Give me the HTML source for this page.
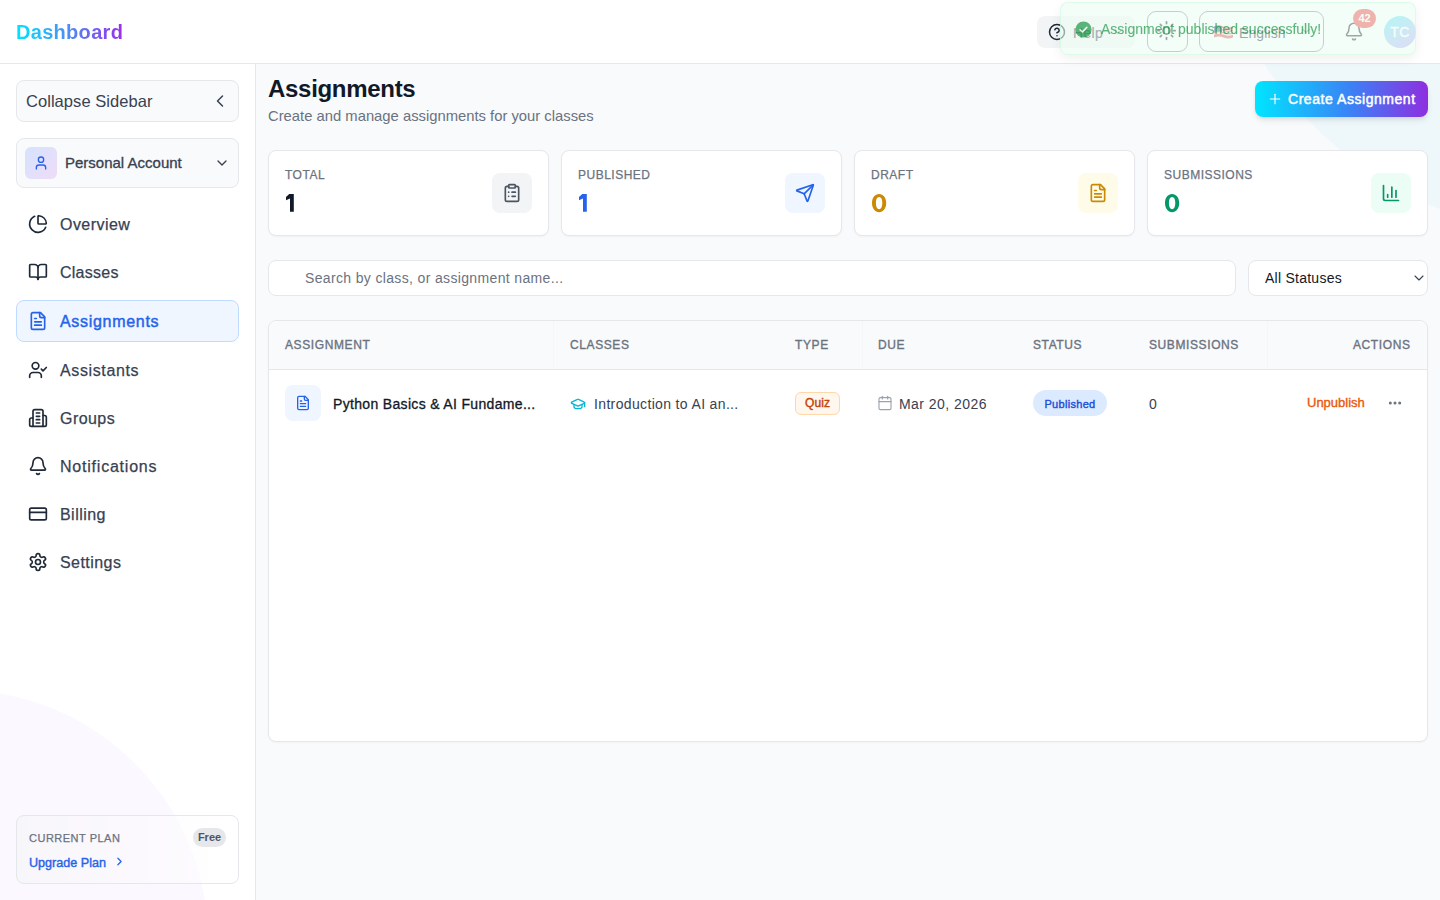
<!DOCTYPE html>
<html><head><meta charset="utf-8">
<style>
*{box-sizing:border-box;margin:0;padding:0}
html,body{width:1440px;height:900px;overflow:hidden;font-family:"Liberation Sans",sans-serif;background:#f8fafc;color:#111827}
.abs{position:absolute}
svg{display:block}
#header{position:absolute;left:0;top:0;width:1440px;height:64px;background:#fff;border-bottom:1px solid #e5e7eb;z-index:5}
#logo{position:absolute;left:16px;top:19px;font-size:20px;letter-spacing:0.3px;font-weight:700;line-height:26px;background:linear-gradient(90deg,#00e5ff,#9b30e8);-webkit-background-clip:text;background-clip:text;color:transparent}
#sidebar{position:absolute;left:0;top:64px;width:256px;height:836px;background:#fff;border-right:1px solid #e5e7eb;overflow:hidden}
#main{position:absolute;left:256px;top:64px;width:1184px;height:836px;background:#f8fafc;overflow:hidden}
.sbtn{position:absolute;left:16px;width:223px;background:#f9fafb;border:1px solid #e5e7eb;border-radius:8px}
.nav{position:absolute;left:16px;width:223px;height:42px}
.nav .ic{position:absolute;left:12px;top:10px}
.nav .tx{position:absolute;left:44px;top:11px;font-size:16px;line-height:20px;font-weight:400;color:#374151;letter-spacing:0.45px;-webkit-text-stroke:0.25px #374151}
.nav.active{background:#eff6ff;border:1px solid #bfdbfe;border-radius:8px}
.nav.active .ic{left:11px;top:10px}
.nav.active .tx{left:43px;top:11px;color:#2563eb;font-weight:400;letter-spacing:0.7px;-webkit-text-stroke:0.45px #2563eb}
.card{position:absolute;top:86px;width:281px;height:86px;background:#fff;border:1px solid #e5e7eb;border-radius:8px;box-shadow:0 1px 2px rgba(0,0,0,.04)}
.card .lb{position:absolute;left:16px;top:16px;font-size:12px;line-height:16px;color:#6b7280;letter-spacing:0.5px;-webkit-text-stroke:0.25px #6b7280}
.card .val{position:absolute;left:16px;top:37px;font-size:25px;line-height:30px;font-weight:700}
.card .ib{position:absolute;right:16px;top:22px;width:40px;height:40px;border-radius:8px}
.card .ib svg{position:absolute;left:10px;top:10px}
.th{position:absolute;top:16px;font-size:12px;line-height:16px;font-weight:400;color:#6b7280;letter-spacing:0.6px;-webkit-text-stroke:0.35px #6b7280}
.td{position:absolute;font-size:14px;line-height:20px}
</style></head>
<body>
<div id="header">
  <div id="logo">Dashboard</div>
  <!-- Help -->
  <div class="abs" style="left:1037px;top:16px;width:98px;height:32px;border-radius:8px;background:#f3f4f6">
    <svg class="abs" style="left:11px;top:7px" width="18" height="18" viewBox="0 0 24 24" fill="none" stroke="#1f2937" stroke-width="2" stroke-linecap="round" stroke-linejoin="round"><circle cx="12" cy="12" r="10"/><path d="M9.09 9a3 3 0 0 1 5.83 1c0 2-3 3-3 3"/><path d="M12 17h.01"/></svg>
    <div class="abs" style="left:36px;top:8px;font-size:14px;line-height:18px;color:#374151;letter-spacing:0.3px;-webkit-text-stroke:0.2px #374151">Help</div>
    <svg class="abs" style="left:75px;top:10px" width="12" height="12" viewBox="0 0 24 24" fill="none" stroke="#374151" stroke-width="2" stroke-linecap="round" stroke-linejoin="round"><path d="m6 9 6 6 6-6"/></svg>
  </div>
  <!-- theme -->
  <div class="abs" style="left:1147px;top:11px;width:41px;height:41px;border-radius:9px;border:1.6px solid #858c92">
    <svg class="abs" style="left:8.4px;top:8.4px" width="21" height="21" viewBox="0 0 24 24" fill="none" stroke="#1f2937" stroke-width="2" stroke-linecap="round" stroke-linejoin="round"><circle cx="12" cy="12" r="4"/><path d="M12 2v2"/><path d="M12 20v2"/><path d="m4.93 4.93 1.41 1.41"/><path d="m17.66 17.66 1.41 1.41"/><path d="M2 12h2"/><path d="M20 12h2"/><path d="m6.34 17.66-1.41 1.41"/><path d="m19.07 4.93-1.41 1.41"/></svg>
  </div>
  <!-- language -->
  <div class="abs" style="left:1199px;top:11px;width:125px;height:41px;border-radius:9px;border:1.6px solid #858c92">
    <svg class="abs" style="left:14px;top:13px" width="19" height="14" viewBox="0 0 19 14"><path d="M0 1.5 Q5 -0.5 9.5 1.5 T19 1.5 V12.5 Q14 14.5 9.5 12.5 T0 12.5Z" fill="#e0585c"/><path d="M0 4 Q5 2 9.5 4 T19 4 M0 6.5 Q5 4.5 9.5 6.5 T19 6.5 M0 9 Q5 7 9.5 9 T19 9" stroke="#f4f4f4" stroke-width="1.3" fill="none"/><path d="M0 1.5 Q4 0 8 1 V7 Q4 6 0 7.5Z" fill="#3b5b9c"/></svg>
    <div class="abs" style="left:39px;top:12px;font-size:14px;line-height:18px;color:#1f2937;letter-spacing:0.1px">English</div>
    <svg class="abs" style="left:100px;top:13px" width="12" height="12" viewBox="0 0 24 24" fill="none" stroke="#4b5563" stroke-width="2" stroke-linecap="round" stroke-linejoin="round"><path d="m6 9 6 6 6-6"/></svg>
  </div>
  <!-- bell -->
  <svg class="abs" style="left:1344px;top:21px" width="20" height="21" viewBox="0 0 24 24" fill="none" stroke="#1f2937" stroke-width="1.8" stroke-linecap="round" stroke-linejoin="round"><path d="M10.268 21a2 2 0 0 0 3.464 0"/><path d="M3.262 15.326A1 1 0 0 0 4 17h16a1 1 0 0 0 .74-1.673C19.41 13.956 18 12.499 18 8A6 6 0 0 0 6 8c0 4.499-1.411 5.956-2.738 7.326"/></svg>
  <div class="abs" style="left:1353px;top:9px;width:23px;height:19px;border-radius:10px;background:#ef4444;color:#fff;font-size:11px;line-height:19px;font-weight:700;text-align:center">42</div>
  <!-- avatar -->
  <div class="abs" style="left:1384px;top:16px;width:32px;height:32px;border-radius:50%;background:linear-gradient(150deg,#67e4f7 10%,#a9c4f5 60%,#c0a8fb);color:#fff;font-size:14px;line-height:32px;font-weight:400;-webkit-text-stroke:0.35px #fff;letter-spacing:0.3px;text-align:center">TC</div>
  <!-- toast -->
  <div class="abs" style="left:1060px;top:2px;width:356px;height:53px;border-radius:8px;background:rgba(236,253,243,.6);border:1px solid rgba(200,250,220,.55);box-shadow:0 4px 12px rgba(0,0,0,.06)">
    <div class="abs" style="left:0;top:0;width:100%;height:100%;opacity:.62">
    <svg class="abs" style="left:14px;top:18px" width="17" height="17" viewBox="0 0 20 20"><circle cx="10" cy="10" r="9.5" fill="#008a2e"/><path d="M6 10.3l2.6 2.6L14 7.4" stroke="#fff" stroke-width="1.8" fill="none" stroke-linecap="round" stroke-linejoin="round"/></svg>
    <div class="abs" style="left:40px;top:17px;font-size:14px;line-height:18px;font-weight:400;color:#008a2e;-webkit-text-stroke:0.12px #008a2e;letter-spacing:0px">Assignment published successfully!</div>
    </div>
  </div>
</div>

<div id="sidebar">
  <div class="abs" style="left:-292px;top:626px;width:500px;height:500px;border-radius:50%;background:rgba(168,85,247,.04)"></div>
  <div class="sbtn" style="top:16px;height:42px">
    <div class="abs" style="left:9px;top:10px;font-size:16.5px;line-height:20px;color:#374151;letter-spacing:0.05px">Collapse Sidebar</div>
    <svg class="abs" style="left:193px;top:10px" width="20" height="20" viewBox="0 0 24 24" fill="none" stroke="#374151" stroke-width="1.8" stroke-linecap="round" stroke-linejoin="round"><path d="m15 18-6-6 6-6"/></svg>
  </div>
  <div class="sbtn" style="top:74px;height:50px">
    <div class="abs" style="left:8px;top:8px;width:32px;height:32px;border-radius:6px;background:linear-gradient(135deg,#d5e3fd,#efdcf8)">
      <svg class="abs" style="left:8px;top:8px" width="16" height="16" viewBox="0 0 24 24" fill="none" stroke="#2563eb" stroke-width="2" stroke-linecap="round" stroke-linejoin="round"><path d="M19 21v-2a4 4 0 0 0-4-4H9a4 4 0 0 0-4 4v2"/><circle cx="12" cy="7" r="4"/></svg>
    </div>
    <div class="abs" style="left:48px;top:15px;font-size:15px;line-height:18px;font-weight:400;color:#374151;-webkit-text-stroke:0.32px #374151">Personal Account</div>
    <svg class="abs" style="left:197px;top:16px" width="16" height="16" viewBox="0 0 24 24" fill="none" stroke="#374151" stroke-width="2" stroke-linecap="round" stroke-linejoin="round"><path d="m6 9 6 6 6-6"/></svg>
  </div>

  <div class="nav" style="top:140px">
    <svg class="ic" width="20" height="20" viewBox="0 0 24 24" fill="none" stroke="#1f2937" stroke-width="2" stroke-linecap="round" stroke-linejoin="round"><path d="M21 12c.552 0 1.005-.449.95-.998a10 10 0 0 0-8.953-8.951c-.55-.055-.998.398-.998.95v8a1 1 0 0 0 1 1z"/><path d="M21.21 15.89A10 10 0 1 1 8 2.83"/></svg>
    <div class="tx">Overview</div>
  </div>
  <div class="nav" style="top:188px">
    <svg class="ic" width="20" height="20" viewBox="0 0 24 24" fill="none" stroke="#1f2937" stroke-width="2" stroke-linecap="round" stroke-linejoin="round"><path d="M12 7v14"/><path d="M3 18a1 1 0 0 1-1-1V4a1 1 0 0 1 1-1h5a4 4 0 0 1 4 4 4 4 0 0 1 4-4h5a1 1 0 0 1 1 1v13a1 1 0 0 1-1 1h-6a3 3 0 0 0-3 3 3 3 0 0 0-3-3z"/></svg>
    <div class="tx" style="letter-spacing:0.25px">Classes</div>
  </div>
  <div class="nav active" style="top:236px">
    <svg class="ic" width="20" height="20" viewBox="0 0 24 24" fill="none" stroke="#2563eb" stroke-width="2" stroke-linecap="round" stroke-linejoin="round"><path d="M15 2H6a2 2 0 0 0-2 2v16a2 2 0 0 0 2 2h12a2 2 0 0 0 2-2V7Z"/><path d="M14 2v4a2 2 0 0 0 2 2h4"/><path d="M10 9H8"/><path d="M16 13H8"/><path d="M16 17H8"/></svg>
    <div class="tx">Assignments</div>
  </div>
  <div class="nav" style="top:286px">
    <svg class="ic" width="20" height="20" viewBox="0 0 24 24" fill="none" stroke="#1f2937" stroke-width="2" stroke-linecap="round" stroke-linejoin="round"><path d="m16 11 2 2 4-4"/><path d="M16 21v-2a4 4 0 0 0-4-4H6a4 4 0 0 0-4 4v2"/><circle cx="9" cy="7" r="4"/></svg>
    <div class="tx" style="letter-spacing:0.62px">Assistants</div>
  </div>
  <div class="nav" style="top:334px">
    <svg class="ic" width="20" height="20" viewBox="0 0 24 24" fill="none" stroke="#1f2937" stroke-width="2" stroke-linecap="round" stroke-linejoin="round"><path d="M6 22V4a2 2 0 0 1 2-2h8a2 2 0 0 1 2 2v18Z"/><path d="M6 12H4a2 2 0 0 0-2 2v6a2 2 0 0 0 2 2h2"/><path d="M18 9h2a2 2 0 0 1 2 2v9a2 2 0 0 1-2 2h-2"/><path d="M10 6h4"/><path d="M10 10h4"/><path d="M10 14h4"/><path d="M10 18h4"/></svg>
    <div class="tx">Groups</div>
  </div>
  <div class="nav" style="top:382px">
    <svg class="ic" width="20" height="20" viewBox="0 0 24 24" fill="none" stroke="#1f2937" stroke-width="2" stroke-linecap="round" stroke-linejoin="round"><path d="M10.268 21a2 2 0 0 0 3.464 0"/><path d="M3.262 15.326A1 1 0 0 0 4 17h16a1 1 0 0 0 .74-1.673C19.41 13.956 18 12.499 18 8A6 6 0 0 0 6 8c0 4.499-1.411 5.956-2.738 7.326"/></svg>
    <div class="tx" style="letter-spacing:0.78px">Notifications</div>
  </div>
  <div class="nav" style="top:430px">
    <svg class="ic" width="20" height="20" viewBox="0 0 24 24" fill="none" stroke="#1f2937" stroke-width="2" stroke-linecap="round" stroke-linejoin="round"><rect width="20" height="14" x="2" y="5" rx="2"/><line x1="2" x2="22" y1="10" y2="10"/></svg>
    <div class="tx">Billing</div>
  </div>
  <div class="nav" style="top:478px">
    <svg class="ic" width="20" height="20" viewBox="0 0 24 24" fill="none" stroke="#1f2937" stroke-width="2" stroke-linecap="round" stroke-linejoin="round"><path d="M12.22 2h-.44a2 2 0 0 0-2 2v.18a2 2 0 0 1-1 1.73l-.43.25a2 2 0 0 1-2 0l-.15-.08a2 2 0 0 0-2.73.73l-.22.38a2 2 0 0 0 .73 2.73l.15.1a2 2 0 0 1 1 1.72v.51a2 2 0 0 1-1 1.74l-.15.09a2 2 0 0 0-.73 2.73l.22.38a2 2 0 0 0 2.73.73l.15-.08a2 2 0 0 1 2 0l.43.25a2 2 0 0 1 1 1.73V20a2 2 0 0 0 2 2h.44a2 2 0 0 0 2-2v-.18a2 2 0 0 1 1-1.73l.43-.25a2 2 0 0 1 2 0l.15.08a2 2 0 0 0 2.73-.73l.22-.39a2 2 0 0 0-.73-2.73l-.15-.08a2 2 0 0 1-1-1.74v-.5a2 2 0 0 1 1-1.74l.15-.09a2 2 0 0 0 .73-2.73l-.22-.38a2 2 0 0 0-2.73-.73l-.15.08a2 2 0 0 1-2 0l-.43-.25a2 2 0 0 1-1-1.73V4a2 2 0 0 0-2-2z"/><circle cx="12" cy="12" r="3"/></svg>
    <div class="tx">Settings</div>
  </div>

  <div class="abs" style="left:16px;top:751px;width:223px;height:69px;border:1px solid #e5e7eb;border-radius:8px;background:linear-gradient(90deg,rgba(243,244,246,.5),rgba(255,255,255,.5))">
    <div class="abs" style="left:12px;top:15px;font-size:11px;line-height:14px;color:#6b7280;letter-spacing:0.5px;-webkit-text-stroke:0.25px #6b7280">CURRENT PLAN</div>
    <div class="abs" style="left:176px;top:12px;width:33px;height:19px;border-radius:10px;background:#e5e7eb;font-size:11px;line-height:19px;font-weight:700;color:#4b5563;text-align:center">Free</div>
    <div class="abs" style="left:12px;top:39px;font-size:12.6px;line-height:16px;font-weight:400;color:#2563eb;-webkit-text-stroke:0.4px #2563eb">Upgrade Plan</div>
    <svg class="abs" style="left:96px;top:39px" width="13" height="13" viewBox="0 0 24 24" fill="none" stroke="#2563eb" stroke-width="2.3" stroke-linecap="round" stroke-linejoin="round"><path d="m9 18 6-6-6-6"/></svg>
  </div>
</div>

<div id="main">
  <div class="abs" style="left:949px;top:-576px;width:748px;height:748px;border-radius:50%;background:rgba(34,211,238,.045)"></div>
  <div class="abs" style="left:12px;top:10px;font-size:24px;line-height:30px;font-weight:700;color:#111827;letter-spacing:-0.3px">Assignments</div>
  <div class="abs" style="left:12px;top:42px;font-size:14.8px;line-height:20px;color:#6b7280">Create and manage assignments for your classes</div>

  <div class="abs" style="left:999px;top:17px;width:173px;height:36px;border-radius:8px;background:linear-gradient(90deg,#00e5ff,#3b82f6 55%,#8e2ee0);box-shadow:0 4px 6px -1px rgba(0,0,0,.1),0 2px 4px -2px rgba(0,0,0,.1)">
    <svg class="abs" style="left:12px;top:10px" width="16" height="16" viewBox="0 0 24 24" fill="none" stroke="#fff" stroke-width="1.7" stroke-linecap="round" stroke-linejoin="round"><path d="M5 12h14"/><path d="M12 5v14"/></svg>
    <div class="abs" style="left:33px;top:9px;font-size:14px;line-height:18px;font-weight:400;color:#fff;-webkit-text-stroke:0.5px #fff;letter-spacing:0.55px">Create Assignment</div>
  </div>

  <div class="card" style="left:12px">
    <div class="lb">TOTAL</div><svg class="abs" style="left:16px;top:42px" width="12" height="20" viewBox="0 0 12 20"><path d="M4.2 1H8.8V18.8H5V5.4L1 7.3V3.9Z" fill="#111827"/></svg>
    <div class="ib" style="background:#f3f4f6"><svg width="20" height="20" viewBox="0 0 24 24" fill="none" stroke="#4b5563" stroke-width="2" stroke-linecap="round" stroke-linejoin="round"><rect width="8" height="4" x="8" y="2" rx="1" ry="1"/><path d="M16 4h2a2 2 0 0 1 2 2v14a2 2 0 0 1-2 2H6a2 2 0 0 1-2-2V6a2 2 0 0 1 2-2h2"/><path d="M12 11h4"/><path d="M12 16h4"/><path d="M8 11h.01"/><path d="M8 16h.01"/></svg></div>
  </div>
  <div class="card" style="left:305px">
    <div class="lb">PUBLISHED</div><svg class="abs" style="left:16px;top:42px" width="12" height="20" viewBox="0 0 12 20"><path d="M4.2 1H8.8V18.8H5V5.4L1 7.3V3.9Z" fill="#2563eb"/></svg>
    <div class="ib" style="background:#eff6ff"><svg width="20" height="20" viewBox="0 0 24 24" fill="none" stroke="#2563eb" stroke-width="2" stroke-linecap="round" stroke-linejoin="round"><path d="M14.536 21.686a.5.5 0 0 0 .937-.024l6.5-19a.496.496 0 0 0-.635-.635l-19 6.5a.5.5 0 0 0-.024.937l7.93 3.18a2 2 0 0 1 1.112 1.11z"/><path d="m21.854 2.147-10.94 10.939"/></svg></div>
  </div>
  <div class="card" style="left:598px">
    <div class="lb">DRAFT</div><svg class="abs" style="left:17px;top:43px" width="16" height="20" viewBox="0 0 16 20"><path fill-rule="evenodd" d="M7.1 0C11.2 0 14.2 3.6 14.2 9.1S11.2 18.2 7.1 18.2 0 14.6 0 9.1 3 0 7.1 0ZM7.1 3C5 3 3.9 5.2 3.9 9.1S5 15.2 7.1 15.2 10.3 13 10.3 9.1 9.2 3 7.1 3Z" fill="#ca8a04"/></svg>
    <div class="ib" style="background:#fefce8"><svg width="20" height="20" viewBox="0 0 24 24" fill="none" stroke="#ca8a04" stroke-width="2" stroke-linecap="round" stroke-linejoin="round"><path d="M15 2H6a2 2 0 0 0-2 2v16a2 2 0 0 0 2 2h12a2 2 0 0 0 2-2V7Z"/><path d="M14 2v4a2 2 0 0 0 2 2h4"/><path d="M10 9H8"/><path d="M16 13H8"/><path d="M16 17H8"/></svg></div>
  </div>
  <div class="card" style="left:891px">
    <div class="lb">SUBMISSIONS</div><svg class="abs" style="left:17px;top:43px" width="16" height="20" viewBox="0 0 16 20"><path fill-rule="evenodd" d="M7.1 0C11.2 0 14.2 3.6 14.2 9.1S11.2 18.2 7.1 18.2 0 14.6 0 9.1 3 0 7.1 0ZM7.1 3C5 3 3.9 5.2 3.9 9.1S5 15.2 7.1 15.2 10.3 13 10.3 9.1 9.2 3 7.1 3Z" fill="#059669"/></svg>
    <div class="ib" style="background:#ecfdf5"><svg width="20" height="20" viewBox="0 0 24 24" fill="none" stroke="#059669" stroke-width="2" stroke-linecap="round" stroke-linejoin="round"><path d="M3 3v16a2 2 0 0 0 2 2h16"/><path d="M18 17V9"/><path d="M13 17V5"/><path d="M8 17v-3"/></svg></div>
  </div>

  <!-- search -->
  <div class="abs" style="left:12px;top:196px;width:968px;height:36px;background:#fff;border:1px solid #e5e7eb;border-radius:8px">
    <div class="abs" style="left:36px;top:8px;font-size:14px;line-height:18px;color:#6b7280;letter-spacing:0.35px">Search by class, or assignment name...</div>
  </div>
  <div class="abs" style="left:992px;top:196px;width:180px;height:36px;background:#fff;border:1px solid #e5e7eb;border-radius:8px">
    <div class="abs" style="left:16px;top:8px;font-size:14px;line-height:18px;color:#111827;letter-spacing:0.25px">All Statuses</div>
    <svg class="abs" style="left:162px;top:9px" width="16" height="16" viewBox="0 0 24 24" fill="none" stroke="#374151" stroke-width="1.6" stroke-linecap="round" stroke-linejoin="round"><path d="m6 9 6 6 6-6"/></svg>
  </div>

  <!-- table -->
  <div class="abs" style="left:12px;top:256px;width:1160px;height:422px;background:#fff;border:1px solid #e5e7eb;border-radius:8px;overflow:hidden;box-shadow:0 1px 2px rgba(0,0,0,.03)">
    <div class="abs" style="left:0;top:0;width:1158px;height:49px;background:#f9fafb;border-bottom:1px solid #e5e7eb"></div>
    <div class="abs" style="left:284px;top:0;width:1px;height:48px;background:#f5f6f8"></div>
    <div class="abs" style="left:593px;top:0;width:1px;height:48px;background:#f5f6f8"></div>
    <div class="abs" style="left:998px;top:0;width:1px;height:48px;background:#f5f6f8"></div>
    <div class="th" style="left:16px">ASSIGNMENT</div>
    <div class="th" style="left:301px">CLASSES</div>
    <div class="th" style="left:526px">TYPE</div>
    <div class="th" style="left:609px">DUE</div>
    <div class="th" style="left:764px">STATUS</div>
    <div class="th" style="left:880px">SUBMISSIONS</div>
    <div class="th" style="left:1084px">ACTIONS</div>

    <div class="abs" style="left:16px;top:64px;width:36px;height:36px;border-radius:8px;background:#eff6ff">
      <svg class="abs" style="left:10px;top:10px" width="16" height="16" viewBox="0 0 24 24" fill="none" stroke="#2563eb" stroke-width="2" stroke-linecap="round" stroke-linejoin="round"><path d="M15 2H6a2 2 0 0 0-2 2v16a2 2 0 0 0 2 2h12a2 2 0 0 0 2-2V7Z"/><path d="M14 2v4a2 2 0 0 0 2 2h4"/><path d="M10 9H8"/><path d="M16 13H8"/><path d="M16 17H8"/></svg>
    </div>
    <div class="td" style="left:64px;top:73px;font-weight:400;color:#111827;letter-spacing:0.33px;-webkit-text-stroke:0.3px #111827">Python Basics &amp; AI Fundame...</div>
    <svg class="abs" style="left:300.5px;top:74.5px" width="16" height="16" viewBox="0 0 24 24" fill="none" stroke="#06b6d4" stroke-width="2" stroke-linecap="round" stroke-linejoin="round"><path d="M21.42 10.922a1 1 0 0 0-.019-1.838L12.83 5.18a2 2 0 0 0-1.66 0L2.6 9.08a1 1 0 0 0 0 1.832l8.57 3.908a2 2 0 0 0 1.66 0z"/><path d="M22 10v6"/><path d="M6 12.5V16a6 3 0 0 0 12 0v-3.5"/></svg>
    <div class="td" style="left:325px;top:73px;color:#374151;letter-spacing:0.35px">Introduction to AI an...</div>
    <div class="abs" style="left:526px;top:71px;width:45px;height:23px;border-radius:6px;background:#fff7ed;border:1px solid #fed7aa;font-size:12px;line-height:21px;font-weight:400;color:#c2410c;-webkit-text-stroke:0.4px #c2410c;letter-spacing:0.1px;text-align:center">Quiz</div>
    <svg class="abs" style="left:608px;top:74px" width="16" height="16" viewBox="0 0 24 24" fill="none" stroke="#9ca3af" stroke-width="1.7" stroke-linecap="round" stroke-linejoin="round"><path d="M8 2v4"/><path d="M16 2v4"/><rect width="18" height="18" x="3" y="4" rx="2"/><path d="M3 10h18"/></svg>
    <div class="td" style="left:630px;top:73px;color:#374151;letter-spacing:0.45px">Mar 20, 2026</div>
    <div class="abs" style="left:764px;top:69px;width:74px;height:26px;border-radius:13px;background:#dbeafe;font-size:11px;line-height:26px;padding-top:1px;font-weight:400;color:#1d4ed8;-webkit-text-stroke:0.4px #1d4ed8;letter-spacing:0.3px;text-align:center">Published</div>
    <div class="td" style="left:880px;top:73px;color:#374151">0</div>
    <div class="abs" style="left:1038px;top:74px;font-size:13px;line-height:16px;font-weight:400;color:#ea580c;-webkit-text-stroke:0.35px #ea580c">Unpublish</div>
    <svg class="abs" style="left:1118px;top:74px" width="16" height="16" viewBox="0 0 24 24" fill="none" stroke="#6b7280" stroke-width="2.5" stroke-linecap="round" stroke-linejoin="round"><circle cx="12" cy="12" r="1"/><circle cx="19" cy="12" r="1"/><circle cx="5" cy="12" r="1"/></svg>
  </div>
</div>
</body></html>
